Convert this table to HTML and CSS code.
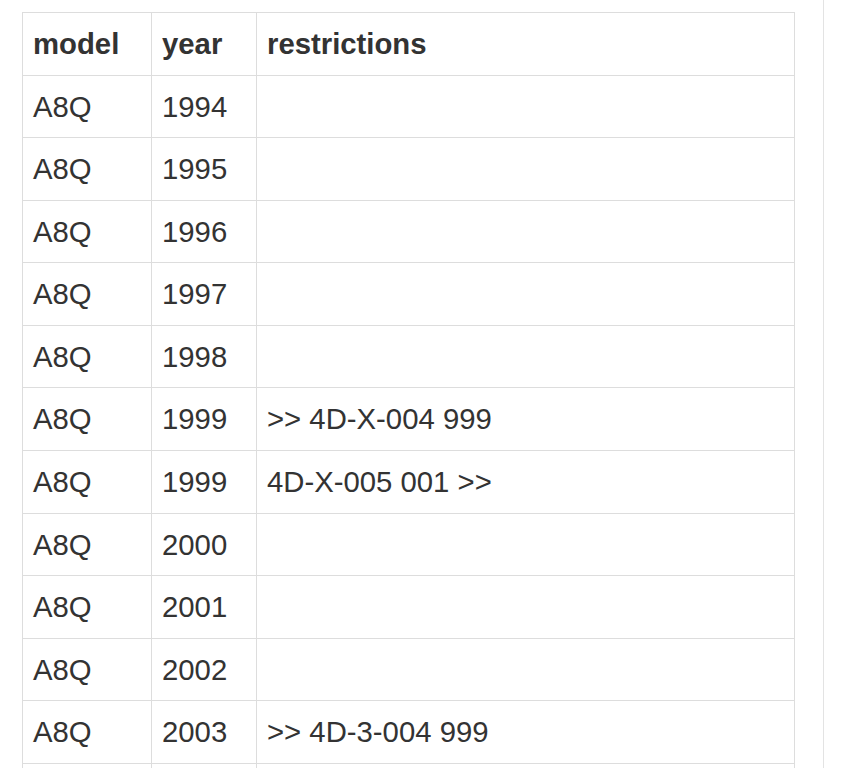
FILE: index.html
```html
<!DOCTYPE html>
<html lang="en">
<head>
<meta charset="utf-8">
<title>Models</title>
<link rel="stylesheet" href="styles.css">
</head>
<body>
<div class="page">
  <main class="content">
    <table class="data">
      <colgroup>
        <col class="c-model">
        <col class="c-year">
        <col class="c-restr">
      </colgroup>
      <thead>
        <tr><th>model</th><th>year</th><th>restrictions</th></tr>
      </thead>
      <tbody>
        <tr><td>A8Q</td><td>1994</td><td></td></tr>
        <tr><td>A8Q</td><td>1995</td><td></td></tr>
        <tr><td>A8Q</td><td>1996</td><td></td></tr>
        <tr><td>A8Q</td><td>1997</td><td></td></tr>
        <tr><td>A8Q</td><td>1998</td><td></td></tr>
        <tr><td>A8Q</td><td>1999</td><td>&gt;&gt; 4D-X-004 999</td></tr>
        <tr><td>A8Q</td><td>1999</td><td>4D-X-005 001 &gt;&gt;</td></tr>
        <tr><td>A8Q</td><td>2000</td><td></td></tr>
        <tr><td>A8Q</td><td>2001</td><td></td></tr>
        <tr><td>A8Q</td><td>2002</td><td></td></tr>
        <tr><td>A8Q</td><td>2003</td><td>&gt;&gt; 4D-3-004 999</td></tr>
        <tr class="cut"><td></td><td></td><td></td></tr>
      </tbody>
    </table>
  </main>
</div>
</body>
</html>
```

FILE: styles.css
```css
html, body {
  margin: 0;
  padding: 0;
  background: #fff;
  overflow: hidden;
}

body {
  font-family: "Liberation Sans", Arial, Helvetica, sans-serif;
  color: #333;
}

.page {
  width: 824px;
  height: 768px;
  box-sizing: border-box;
  border-right: 1px solid #e3e3e3;
  padding: 12px 0 0 22px;
}

.data {
  border-collapse: collapse;
  table-layout: fixed;
  width: 772px;
  font-size: 29.3px;
}

.c-model { width: 129px; }
.c-year { width: 105px; }
.c-restr { width: 538px; }

.data th,
.data td {
  border: 1px solid #dddddd;
  padding: 10px 10px;
  height: 41.58px;
  line-height: 41.58px;
  text-align: left;
  vertical-align: middle;
  white-space: nowrap;
}

.data th {
  font-weight: bold;
}
```
